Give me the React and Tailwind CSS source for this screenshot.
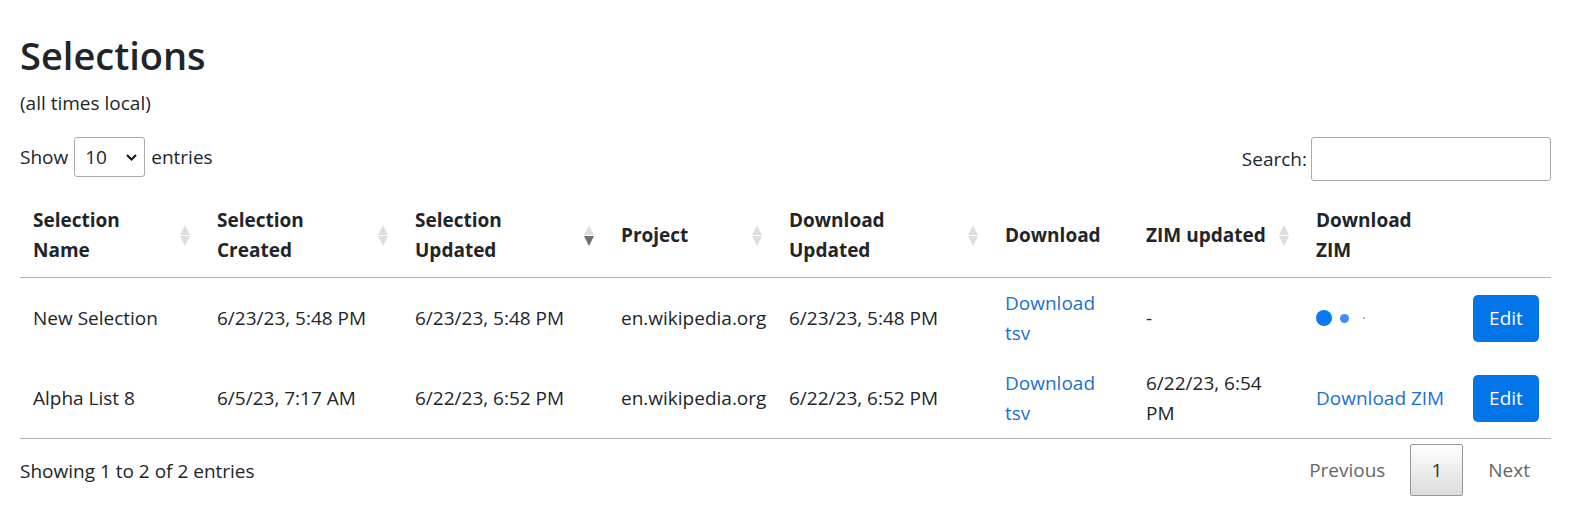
import React from "react";

const SortIcon = ({ dir }) => (
  <svg width="10" height="21" viewBox="0 0 10 21" className="shrink-0">
    <polygon points="0,10 5,0 10,10" fill={dir === "asc" ? "#6e6e6e" : "#dedede"} />
    <polygon points="0,11 10,11 5,21" fill={dir === "desc" ? "#6e6e6e" : "#dedede"} />
  </svg>
);

const columns = [
  { label: ["Selection", "Name"], w: "w-[184px]", sort: "both" },
  { label: ["Selection", "Created"], w: "w-[198px]", sort: "both" },
  { label: ["Selection", "Updated"], w: "w-[206px]", sort: "desc" },
  { label: ["Project"], w: "w-[168px]", sort: "both" },
  { label: ["Download", "Updated"], w: "w-[216px]", sort: "both" },
  { label: ["Download"], w: "w-[141px]" },
  { label: ["ZIM updated"], w: "w-[170px]", sort: "both" },
  { label: ["Download", "ZIM"], w: "w-[157px]" },
  { label: [], w: "w-[91px]" },
];

const Dots = () => (
  <div className="flex items-center">
    <span className="w-[16px] h-[16px] rounded-full bg-[#0a78f5]" />
    <span className="w-[9px] h-[9px] rounded-full bg-[#3b8ff5] ml-[8px]" />
    <span className="w-[2px] h-[2px] rounded-full bg-[#6aa9f5] ml-[14px]" />
  </div>
);

const EditButton = () => (
  <button className="w-[66px] h-[47px] rounded-[5px] bg-[#0275e8] text-white text-[19px] flex items-center justify-center">
    Edit
  </button>
);

const Link2 = ({ children }) => (
  <a href="#" className="text-[#1a6fd6]">
    {children}
  </a>
);

const rows = [
  {
    name: "New Selection",
    created: "6/23/23, 5:48 PM",
    updated: "6/23/23, 5:48 PM",
    project: "en.wikipedia.org",
    dlUpdated: "6/23/23, 5:48 PM",
    zimUpdated: "-",
    zim: <Dots />,
  },
  {
    name: "Alpha List 8",
    created: "6/5/23, 7:17 AM",
    updated: "6/22/23, 6:52 PM",
    project: "en.wikipedia.org",
    dlUpdated: "6/22/23, 6:52 PM",
    zimUpdated: (
      <>
        6/22/23, 6:54
        <br />
        PM
      </>
    ),
    zim: <Link2>Download ZIM</Link2>,
  },
];

export default function App() {
  return (
    <div className="bg-white min-h-screen font-['Open_Sans',sans-serif] text-[#212529] text-[19px] leading-[30px]">
      <div className="w-[1531px] ml-[20px]">
        <h1 className="pt-[31px] text-[38px] leading-[48px] font-semibold">Selections</h1>
        <p className="mt-[9px]">(all times local)</p>

        <div className="mt-[19px] h-[44px] flex items-start justify-between">
          <div className="flex items-center h-[40px]">
            <span>Show</span>
            <div className="relative ml-[6px] w-[71px] h-[40px]">
              <select className="appearance-none w-full h-full border border-[#aaa] rounded-[3px] bg-white pl-[10px] text-[19px] text-[#212529] outline-none">
                <option>10</option>
                <option>25</option>
                <option>50</option>
                <option>100</option>
              </select>
              <svg
                width="11"
                height="7"
                viewBox="0 0 11 7"
                className="absolute right-[8px] top-[17px] pointer-events-none"
              >
                <path d="M1 1l4.5 4.5L10 1" stroke="#111" strokeWidth="2" fill="none" />
              </svg>
            </div>
            <span className="ml-[6px]">entries</span>
          </div>
          <div className="flex items-center h-[44px]">
            <span>Search:</span>
            <input
              type="text"
              className="ml-[4px] w-[240px] h-[44px] border border-[#aaa] rounded-[3px] outline-none px-2"
            />
          </div>
        </div>

        <table className="mt-[12px] w-full table-fixed border-collapse border-b border-[#b3b3b3]">
          <thead>
            <tr className="border-b border-[#b3b3b3]">
              {columns.map((c, i) => (
                <th key={i} className={`${c.w} text-left font-bold align-middle pl-[13px] pr-[14px] py-[12px]`}>
                  <div className="flex items-center justify-between">
                    <span className="whitespace-nowrap">
                      {c.label.map((l, j) => (
                        <React.Fragment key={j}>
                          {j > 0 && <br />}
                          {l}
                        </React.Fragment>
                      ))}
                    </span>
                    {c.sort && <SortIcon dir={c.sort} />}
                  </div>
                </th>
              ))}
            </tr>
          </thead>
          <tbody>
            {rows.map((r, i) => (
              <tr key={i} className="h-[80px]">
                <td className="px-[13px] py-[10px] align-middle whitespace-nowrap">{r.name}</td>
                <td className="px-[13px] py-[10px] align-middle whitespace-nowrap">{r.created}</td>
                <td className="px-[13px] py-[10px] align-middle whitespace-nowrap">{r.updated}</td>
                <td className="px-[13px] py-[10px] align-middle whitespace-nowrap">{r.project}</td>
                <td className="px-[13px] py-[10px] align-middle whitespace-nowrap">{r.dlUpdated}</td>
                <td className="px-[13px] py-[10px] align-middle whitespace-nowrap">
                  <Link2>
                    Download
                    <br />
                    tsv
                  </Link2>
                </td>
                <td className="px-[13px] py-[10px] align-middle whitespace-nowrap">{r.zimUpdated}</td>
                <td className="px-[13px] py-[10px] align-middle whitespace-nowrap">{r.zim}</td>
                <td className="px-[13px] py-[10px] align-middle">
                  <EditButton />
                </td>
              </tr>
            ))}
          </tbody>
        </table>

        <div className="flex justify-between items-start">
          <div className="pt-[17px] text-[#212529]">Showing 1 to 2 of 2 entries</div>
          <div className="pt-[5px] flex items-center">
            <span className="px-[20px] py-[10px] border border-transparent text-[#666]">Previous</span>
            <span className="ml-[4px] px-[20px] py-[10px] border border-[#979797] rounded-[2px] bg-gradient-to-b from-white to-[#dcdcdc] text-[#333]">
              1
            </span>
            <span className="ml-[4px] px-[20px] py-[10px] border border-transparent text-[#666]">Next</span>
          </div>
        </div>
      </div>
    </div>
  );
}
